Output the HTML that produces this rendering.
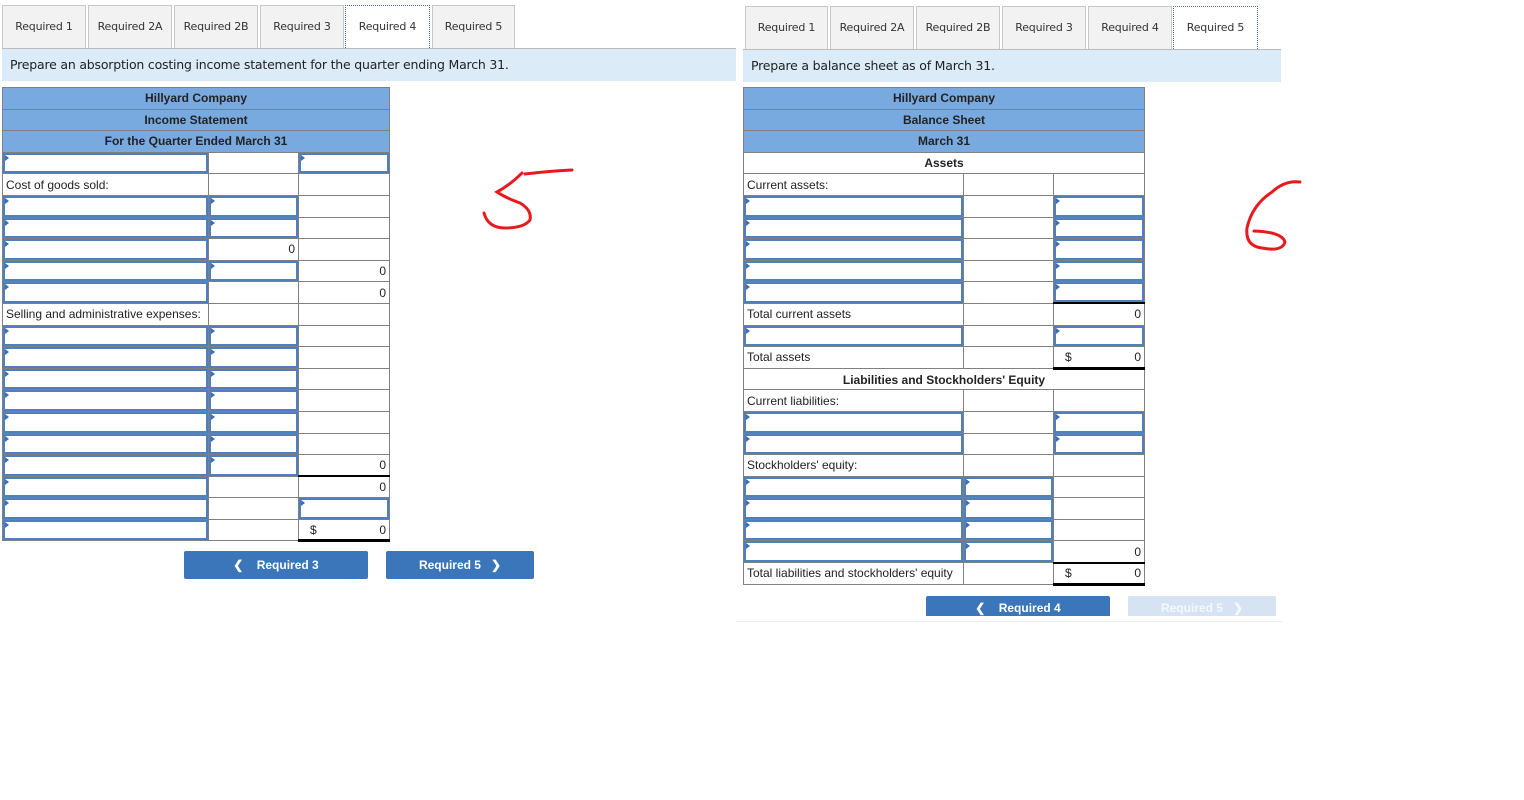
<!DOCTYPE html>
<html><head><meta charset="utf-8"><style>
*{box-sizing:border-box;margin:0;padding:0}
body{width:1524px;height:800px;background:#fff;position:relative;overflow:hidden;font-family:"Liberation Sans",Arial,sans-serif;font-size:12px;color:#222}
.tab{position:absolute;height:43px;background:#f2f2f2;border:1px solid #c8c8c8;border-bottom:none;font-family:"DejaVu Sans",Verdana,sans-serif;font-size:11px;color:#333;text-align:center;line-height:42px;letter-spacing:-0.2px}
.tab.act{background:#fff;border:1px dotted #4a6fa5;border-bottom:none}
.bar{position:absolute;background:#dcebf8;font-family:"DejaVu Sans",Verdana,sans-serif;font-size:12.5px;color:#222;padding-left:8px;line-height:32px;letter-spacing:-0.2px}
.line{position:absolute;height:1px;background:#aaa}
table{position:absolute;border-collapse:collapse;table-layout:fixed}
td{border:1px solid #808080;height:21.6px;padding:0 3px;position:relative;white-space:nowrap;font-size:12px}
td.h{background:#78aadf;text-align:center;font-weight:bold;color:#222;border-color:#808080}
td.s{text-align:center;font-weight:bold}
td.i{box-shadow:inset 0 0 0 2px #4f7fbd}
td.i::before{content:"";position:absolute;left:2px;top:2px;border-left:4px solid #3a6fb5;border-top:3px solid transparent;border-bottom:3px solid transparent}
td.r{text-align:right}
td.t{border-bottom:2px solid #000}
td.tt{border-bottom:3px solid #000}
td.d span{float:left;padding-left:8px}
.btn{position:absolute;background:#3a76b9;color:#fff;font-weight:bold;font-size:12px;text-align:center;border-radius:2px}
</style></head><body>

<div class="tab" style="left:2px;top:5px;width:84px">Required 1</div>
<div class="tab" style="left:88px;top:5px;width:84px">Required 2A</div>
<div class="tab" style="left:174px;top:5px;width:84px">Required 2B</div>
<div class="tab" style="left:260px;top:5px;width:84px">Required 3</div>
<div class="tab act" style="left:345px;top:5px;width:85px">Required 4</div>
<div class="tab" style="left:432px;top:5px;width:83px">Required 5</div>
<div class="line" style="left:2px;top:48px;width:734px;background:#bbb"></div>
<div class="bar" style="left:2px;top:49px;width:734px;height:32px">Prepare an absorption costing income statement for the quarter ending March 31.</div>

<table style="left:2px;top:87px;width:387px">
<colgroup><col style="width:206px"><col style="width:90px"><col style="width:91px"></colgroup>
<tr><td class="h" colspan="3">Hillyard Company</td></tr>
<tr><td class="h" colspan="3">Income Statement</td></tr>
<tr><td class="h" colspan="3">For the Quarter Ended March 31</td></tr>
<tr><td class="i"></td><td></td><td class="i"></td></tr>
<tr><td>Cost of goods sold:</td><td></td><td></td></tr>
<tr><td class="i"></td><td class="i"></td><td></td></tr>
<tr><td class="i"></td><td class="i"></td><td></td></tr>
<tr><td class="i"></td><td class="r">0</td><td></td></tr>
<tr><td class="i"></td><td class="i"></td><td class="r">0</td></tr>
<tr><td class="i"></td><td></td><td class="r">0</td></tr>
<tr><td>Selling and administrative expenses:</td><td></td><td></td></tr>
<tr><td class="i"></td><td class="i"></td><td></td></tr>
<tr><td class="i"></td><td class="i"></td><td></td></tr>
<tr><td class="i"></td><td class="i"></td><td></td></tr>
<tr><td class="i"></td><td class="i"></td><td></td></tr>
<tr><td class="i"></td><td class="i"></td><td></td></tr>
<tr><td class="i"></td><td class="i"></td><td></td></tr>
<tr><td class="i"></td><td class="i"></td><td class="r t">0</td></tr>
<tr><td class="i"></td><td></td><td class="r">0</td></tr>
<tr><td class="i"></td><td></td><td class="i"></td></tr>
<tr><td class="i"></td><td></td><td class="r d tt"><span>$</span>0</td></tr>
</table>

<div class="btn" style="left:184px;top:551px;width:184px;height:28px;line-height:28px">&#10094;&nbsp;&nbsp;&nbsp; Required 3</div>
<div class="btn" style="left:386px;top:551px;width:148px;height:28px;line-height:28px">Required 5 &nbsp;&nbsp;&#10095;</div>

<svg style="position:absolute;left:470px;top:160px" width="120" height="80"><path d="M52 13 Q40 25 27 32 Q36 38 50 43 Q62 50 60 60 Q54 68 35 68 Q18 68 14 53 M55 14 Q80 11 102 10" fill="none" stroke="#e8191f" stroke-width="3" stroke-linecap="round"/></svg>
<svg style="position:absolute;left:1230px;top:170px" width="80" height="90"><path d="M70 12 Q55 10 42 22 Q22 35 17 58 Q15 76 32 78 Q52 82 55 72 Q52 62 24 61" fill="none" stroke="#e8191f" stroke-width="3" stroke-linecap="round"/></svg>

<div class="tab" style="left:745px;top:6px;width:83px">Required 1</div>
<div class="tab" style="left:830px;top:6px;width:84px">Required 2A</div>
<div class="tab" style="left:916px;top:6px;width:84px">Required 2B</div>
<div class="tab" style="left:1002px;top:6px;width:84px">Required 3</div>
<div class="tab" style="left:1088px;top:6px;width:84px">Required 4</div>
<div class="tab act" style="left:1173px;top:6px;width:85px">Required 5</div>
<div class="line" style="left:743px;top:49px;width:538px;background:#bbb"></div>
<div class="bar" style="left:743px;top:50px;width:538px;height:32px">Prepare a balance sheet as of March 31.</div>

<table style="left:743px;top:87px;width:401px">
<colgroup><col style="width:220px"><col style="width:90px"><col style="width:91px"></colgroup>
<tr><td class="h" colspan="3">Hillyard Company</td></tr>
<tr><td class="h" colspan="3">Balance Sheet</td></tr>
<tr><td class="h" colspan="3">March 31</td></tr>
<tr><td class="s" colspan="3">Assets</td></tr>
<tr><td>Current assets:</td><td></td><td></td></tr>
<tr><td class="i"></td><td></td><td class="i"></td></tr>
<tr><td class="i"></td><td></td><td class="i"></td></tr>
<tr><td class="i"></td><td></td><td class="i"></td></tr>
<tr><td class="i"></td><td></td><td class="i"></td></tr>
<tr><td class="i"></td><td></td><td class="i t"></td></tr>
<tr><td>Total current assets</td><td></td><td class="r">0</td></tr>
<tr><td class="i"></td><td></td><td class="i"></td></tr>
<tr><td>Total assets</td><td></td><td class="r d tt"><span>$</span>0</td></tr>
<tr><td class="s" colspan="3">Liabilities and Stockholders' Equity</td></tr>
<tr><td>Current liabilities:</td><td></td><td></td></tr>
<tr><td class="i"></td><td></td><td class="i"></td></tr>
<tr><td class="i"></td><td></td><td class="i"></td></tr>
<tr><td>Stockholders' equity:</td><td></td><td></td></tr>
<tr><td class="i"></td><td class="i"></td><td></td></tr>
<tr><td class="i"></td><td class="i"></td><td></td></tr>
<tr><td class="i"></td><td class="i"></td><td></td></tr>
<tr><td class="i"></td><td class="i"></td><td class="r t">0</td></tr>
<tr><td>Total liabilities and stockholders' equity</td><td></td><td class="r d tt"><span>$</span>0</td></tr>
</table>

<div class="btn" style="left:926px;top:596px;width:184px;height:20px;line-height:24px;border-radius:2px 2px 0 0">&#10094;&nbsp;&nbsp;&nbsp; Required 4</div>
<div class="btn" style="left:1128px;top:596px;width:148px;height:20px;line-height:24px;background:#d6e3f2;color:#f4f8fc;border-radius:2px 2px 0 0">Required 5 &nbsp;&nbsp;&#10095;</div>
<div class="line" style="left:736px;top:621px;width:546px;background:#eee"></div>
</body></html>
